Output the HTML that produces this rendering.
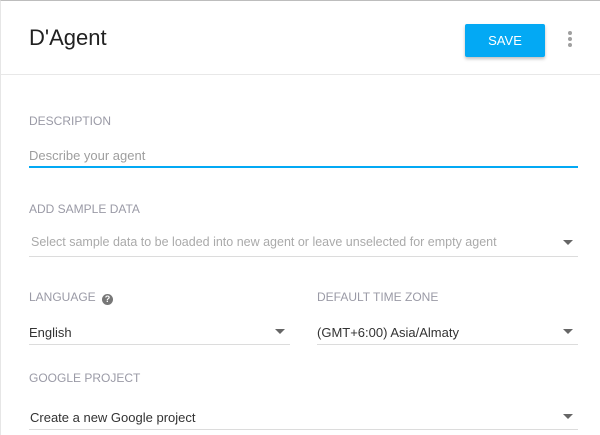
<!DOCTYPE html>
<html><head><style>
body{margin:0;width:600px;height:435px;overflow:hidden;background:#fff;font-family:"Liberation Sans",Arial,sans-serif;}
.wrap{position:absolute;left:0;top:0;width:600px;height:435px;border-top:1px solid #bdbdbd;border-left:1px solid #e6e6e6;box-sizing:border-box;}
.hdr{position:absolute;left:0;top:0;width:600px;height:73px;border-bottom:1px solid #e8e8e8;}
.title{position:absolute;left:28px;top:24px;font-size:22px;color:#212121;}
.save{position:absolute;left:464px;top:23px;width:80px;height:33px;background:#03a9f4;color:#fff;font-size:13px;text-align:center;line-height:33px;border-radius:2px;box-shadow:0 2px 3px rgba(0,0,0,.25);}
.dot{position:absolute;left:567px;width:4px;height:4px;border-radius:2px;background:#a0a0a0;}
.lbl{position:absolute;font-size:12px;color:#9a9aa6;}
.val{position:absolute;font-size:13px;color:#333;}
.ph{color:#9e9e9e;}
.line{position:absolute;height:1px;background:#dcdcdc;}
.arr{position:absolute;width:0;height:0;border-left:5px solid transparent;border-right:5px solid transparent;border-top:5px solid #666;}
</style></head><body><div class="wrap">
<div class="hdr">
<div class="title">D'Agent</div>
<div class="save">SAVE</div>
<div class="dot" style="top:30px"></div><div class="dot" style="top:36px"></div><div class="dot" style="top:42px"></div>
</div>
<div class="lbl" style="left:28px;top:113px">DESCRIPTION</div>
<div class="val ph" style="left:28px;top:147px">Describe your agent</div>
<div class="line" style="left:28px;top:165px;width:549px;height:2px;background:#03a9f4"></div>
<div class="lbl" style="left:28px;top:201px">ADD SAMPLE DATA</div>
<div class="val ph" style="left:30px;top:234px;font-size:12.5px;color:#aaa">Select sample data to be loaded into new agent or leave unselected for empty agent</div>
<div class="arr" style="left:562px;top:239px"></div>
<div class="line" style="left:28px;top:255px;width:549px"></div>
<div class="lbl" style="left:28px;top:289px">LANGUAGE <span style="display:inline-block;width:11px;height:11px;border-radius:6px;background:#777;color:#fff;font-size:9px;text-align:center;line-height:11px;font-weight:bold;vertical-align:-1px;margin-left:3px">?</span></div>
<div class="val" style="left:28px;top:324px">English</div>
<div class="arr" style="left:274px;top:328px"></div>
<div class="line" style="left:28px;top:343px;width:261px"></div>
<div class="lbl" style="left:316px;top:289px">DEFAULT TIME ZONE</div>
<div class="val" style="left:316px;top:324px">(GMT+6:00) Asia/Almaty</div>
<div class="arr" style="left:562px;top:328px"></div>
<div class="line" style="left:316px;top:343px;width:261px"></div>
<div class="lbl" style="left:28px;top:370px">GOOGLE PROJECT</div>
<div class="val" style="left:29px;top:409px">Create a new Google project</div>
<div class="arr" style="left:562px;top:413px"></div>
<div class="line" style="left:28px;top:428px;width:549px"></div>
</div></body></html>
